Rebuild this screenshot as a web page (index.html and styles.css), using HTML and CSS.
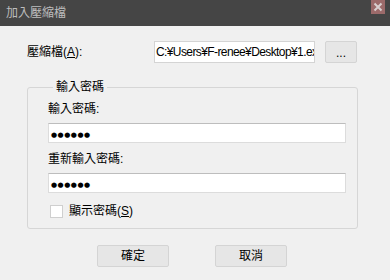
FILE: index.html
```html
<!DOCTYPE html>
<html lang="zh-Hant">
<head>
  <meta charset="UTF-8">
  <meta name="viewport" content="width=device-width, initial-scale=1.0">
  <title>加入壓縮檔</title>
  <link rel="stylesheet" href="styles.css">
</head>
<body>
  <div id="dialog">
    <div class="titlebar">
      <span class="title">加入壓縮檔</span>
      <span class="close">
        <svg width="14" height="14" viewBox="0 0 14 14">
          <path d="M3.5 3.5 L10.5 10.5 M10.5 3.5 L3.5 10.5" stroke="#d9cfcf" stroke-width="2" fill="none"/>
        </svg>
      </span>
    </div>

    <div class="content">
      <div class="file-row">
        <span class="file-label">壓縮檔(<u>A</u>):</span>
        <div class="textbox file-box">C:¥Users¥F-renee¥Desktop¥1.ex</div>
        <div class="btn browse">...</div>
      </div>

      <fieldset class="group">
        <legend>輸入密碼</legend>
        <div class="field-label first">輸入密碼:</div>
        <div class="textbox pass-box"><span class="dots">●●●●●●</span></div>
        <div class="field-label">重新輸入密碼:</div>
        <div class="textbox pass-box"><span class="dots">●●●●●●</span></div>
        <div class="check-row">
          <span class="checkbox"></span>
          <span>顯示密碼(<u>S</u>)</span>
        </div>
      </fieldset>

      <div class="buttons">
        <div class="btn action">確定</div>
        <div class="btn action">取消</div>
      </div>
    </div>
  </div>
</body>
</html>
```

FILE: styles.css
```css
html, body {
  margin: 0;
  padding: 0;
}

body {
  background-color: #f0f0f0;
  color: #000;
  font-family: "Liberation Sans", "Noto Sans CJK JP", sans-serif;
  font-size: 12px;
  line-height: 16px;
}

#dialog {
  width: 390px;
  height: 280px;
  overflow: hidden;
}

.titlebar {
  height: 26px;
  background-color: #454545;
  display: flex;
  justify-content: space-between;
  align-items: flex-start;
}

.title {
  color: #bdbdbd;
  font-size: 12px;
  line-height: 26px;
  padding-left: 6px;
}

.close {
  width: 14px;
  height: 14px;
  margin-right: 5px;
  background-color: #9c6a6a;
  display: flex;
}

.content {
  padding: 15px 0 0 27px;
}

.file-row {
  display: flex;
  align-items: center;
  height: 22px;
}

.file-label {
  width: 127px;
}

u {
  text-decoration: underline;
  text-underline-offset: 1px;
}

.textbox {
  box-sizing: border-box;
  background-color: #fff;
  border: 1px solid #dcdcdc;
  border-top-color: #bdbdbd;
  overflow: hidden;
  white-space: nowrap;
}

.file-box {
  width: 161px;
  height: 22px;
  line-height: 20px;
  padding-left: 1px;
  border-color: #d4d4d4;
  letter-spacing: -0.6px;
}

.btn {
  box-sizing: border-box;
  background-color: #e6e6e6;
  border: 1px solid #d4d4d4;
  border-radius: 2px;
  text-align: center;
}

.browse {
  width: 32px;
  height: 22px;
  line-height: 22px;
  margin-left: 10px;
}

.group {
  width: 331px;
  box-sizing: border-box;
  margin: 16px 0 0 0;
  padding: 0 11px 9px 20px;
  border: 1px solid #d6d6d6;
  border-radius: 3px;
}

.group legend {
  padding: 0 3px;
  margin-left: 5px;
  line-height: 16px;
}

.field-label {
  margin-top: 8px;
  margin-bottom: 6px;
}

.field-label.first {
  margin-top: 6px;
}

.pass-box {
  height: 20px;
  line-height: 18px;
  padding-left: 2px;
}

.dots {
  font-family: "DejaVu Sans", sans-serif;
  font-size: 7px;
  letter-spacing: 0.5px;
}

.check-row {
  display: flex;
  align-items: center;
  margin-top: 10px;
  padding-left: 2px;
}

.checkbox {
  box-sizing: border-box;
  width: 13px;
  height: 13px;
  background-color: #fff;
  border: 1px solid #cfcfcf;
  margin-right: 6px;
}

.buttons {
  display: flex;
  gap: 46px;
  margin: 16px 0 0 70px;
}

.action {
  width: 72px;
  height: 22px;
  line-height: 20px;
}
```
